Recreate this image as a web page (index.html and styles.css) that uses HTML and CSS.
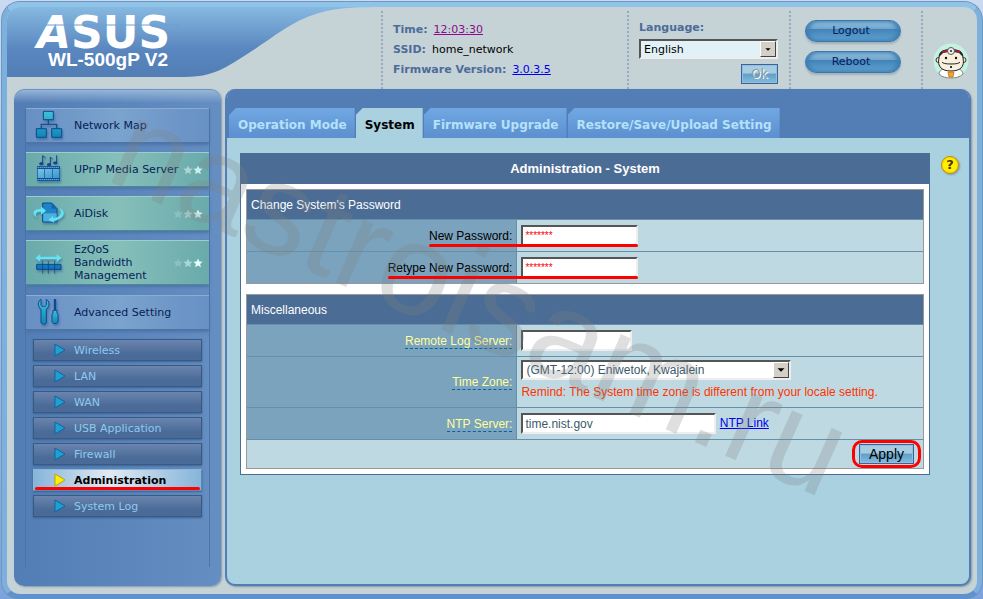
FILE: index.html
```html
<!DOCTYPE html>
<html lang="en">
<head>
    <meta charset="UTF-8">
    <meta name="viewport" content="width=device-width, initial-scale=1.0">
    <title>ASUS Wireless Router WL-500gP V2 - System</title>
    <link rel="stylesheet" href="styles.css">
</head>
<body>
    <svg class="defs" width="0" height="0" aria-hidden="true">
        <defs>
            <linearGradient id="teal" x1="0" y1="0" x2="0" y2="1">
                <stop offset="0" stop-color="#3fc0d8"/>
                <stop offset="1" stop-color="#0f86b4"/>
            </linearGradient>
            <linearGradient id="film" x1="0" y1="0" x2="1" y2="1">
                <stop offset="0" stop-color="#7cc4e4"/>
                <stop offset="1" stop-color="#3796cc"/>
            </linearGradient>
            <symbol id="star" viewBox="0 0 10 10">
                <path d="M5 .5 6.3 3.6 9.6 3.8 7.1 6 7.9 9.3 5 7.5 2.1 9.3 2.9 6 .4 3.8 3.7 3.6z" fill="#e8ffff"/>
            </symbol>
        </defs>
    </svg>

    <div class="frame">
        <header class="header">
            <svg class="brand" viewBox="0 0 376 72" width="376" height="72" role="img" aria-label="ASUS WL-500gP V2">
                <defs>
                    <linearGradient id="swoosh" x1="0" y1="0" x2="0" y2="1">
                        <stop offset="0" stop-color="#86b9e1"/>
                        <stop offset=".6" stop-color="#5a87bf"/>
                        <stop offset="1" stop-color="#527db5"/>
                    </linearGradient>
                </defs>
                <path d="M0 0H376C330 0 318 3 298 11C276 20 250 43 219 60C203 69 190 70 170 70H0z" fill="url(#swoosh)"/>
                <text class="brand-name" x="30" y="41"><tspan class="brand-slant">A</tspan>SUS</text>
                <path d="M38 18H174" stroke="#6f9fd0" stroke-width="1"/>
                <text class="brand-model" x="41" y="59">WL-500gP V2</text>
            </svg>
            <dl class="info">
                <div><dt>Time:</dt><dd><a class="visited" href="#time">12:03:30</a></dd></div>
                <div><dt>SSID:</dt><dd>home_network</dd></div>
                <div><dt>Firmware Version:</dt><dd><a href="#firmware">3.0.3.5</a></dd></div>
            </dl>
            <form class="language">
                <label for="lang">Language:</label>
                <span class="select">
                    <select id="lang"><option>English</option></select>
                    <svg viewBox="0 0 16 16" width="16" height="16"><path d="M5 7h6L8 10z"/></svg>
                </span>
                <button type="button" class="button button-off">Ok</button>
            </form>
            <div class="actions">
                <button type="button" class="pill">Logout</button>
                <button type="button" class="pill">Reboot</button>
            </div>
            <div class="doctor">
                <svg viewBox="0 0 36 36" width="36" height="36">
                    <circle cx="18" cy="18" r="17.500" fill="#c3f3e0"/>
                    <path d="M6 31C6 28 9 26 13 25h10c4 1 7 3 7 6-3 3-7 4-12 4s-9-1-12-4z" fill="#fff" stroke="#555" stroke-width=".7"/>
                    <circle cx="5.500" cy="17" r="2.500" fill="#f6e9d2" stroke="#333"/>
                    <circle cx="30.500" cy="17" r="2.500" fill="#f6e9d2" stroke="#333"/>
                    <path d="M6 15C6 8 11 7 18 7s12 1 12 8c2 9-3 13-12 13S4 24 6 15z" fill="#f8f0dc" stroke="#222"/>
                    <path d="M6 14C6 8 11 6 18 6s12 2 12 8l-4-4q-8-2-16 0z" fill="#23222a"/>
                    <path d="M9 9q9-3 18 0" stroke="#a51c40" stroke-width="2" fill="none"/>
                    <circle cx="18" cy="8" r="3.500" fill="#eee" stroke="#555"/>
                    <circle cx="18" cy="8" r="1" fill="#222"/>
                    <circle cx="13" cy="15" r="1.200" fill="#111"/>
                    <circle cx="23" cy="15" r="1.200" fill="#111"/>
                    <path d="M9 19q1 2 9 2t9-2" stroke="#222" fill="none"/>
                    <path d="M17 24h2" stroke="#333" stroke-width="2"/>
                    <path d="M15 29h6l-1 5h-4z" fill="#f0a820" stroke="#c65f12" stroke-width=".7"/>
                </svg>
            </div>
        </header>

        <div class="columns">
            <nav class="sidebar">
                <div class="rail">
                    <a class="item" href="#map">
                        <svg class="icon" viewBox="0 0 96 96"><path d="M46 30V43M25 55V43H71V55" stroke="#16508f" stroke-width="4" fill="none"/><g fill="url(#teal)" stroke="#0b4a93" stroke-width="3"><path d="M31 4h30v25H31zM10 56h30v26H10zM56 56h30v26H56z"/></g></svg>
                        Network Map
                    </a>
                    <a class="item item-green" href="#upnp">
                        <svg class="icon" viewBox="0 0 96 96"><g fill="#14418d" stroke="#14418d"><path d="M29 28V5l9 7M52 31V9l7 7M71 26V4" fill="none" stroke-width="3"/><ellipse cx="25" cy="29" rx="6" ry="4"/><ellipse cx="48" cy="32" rx="6" ry="4"/><ellipse cx="67" cy="27" rx="6" ry="4"/></g><path d="M12 36h69v45H12z" fill="#0c4f96"/><path d="M14 45h20v27H14zM36 45h22v27H36zM60 45h19v27H60z" fill="url(#film)"/><path d="M14 40h66M14 77h66" stroke="#aee4f4" stroke-width="3" stroke-dasharray="3 3"/></svg>
                        UPnP Media Server
                        <svg class="stars" viewBox="0 0 30 10"><use href="#star" x="10" width="10" height="10" opacity=".5"/><use href="#star" x="20" width="10" height="10" opacity=".8"/></svg>
                    </a>
                    <a class="item item-green" href="#aidisk">
                        <svg class="icon" viewBox="0 0 96 96"><path d="M29 15h27l16 17v40H29z" fill="#1f83c4" stroke="#0b4a93" stroke-width="3"/><path d="M31 46h40v24H31z" fill="#4db1de"/><path d="M56 15v17h16z" fill="#0f63b5"/><path d="M14 60C-6 50-2 30 24 33V25l15 13-15 12v-9C8 40 4 50 14 60z" fill="#62e4f4"/><path d="M78 30c24 8 18 34-16 38l2 6-18-8 14-12 1 7c22-3 30-18 17-31z" fill="#62e4f4"/></svg>
                        AiDisk
                        <svg class="stars" viewBox="0 0 30 10"><use href="#star" width="10" height="10" opacity=".2"/><use href="#star" x="10" width="10" height="10" opacity=".5"/><use href="#star" x="20" width="10" height="10" opacity=".9"/></svg>
                    </a>
                    <a class="item item-green item-tall" href="#ezqos">
                        <svg class="icon" viewBox="0 0 96 96"><path d="M7 33l15-12v8h49v-8l15 12-15 12v-8H22v8z" fill="#62e4f4"/><path d="M11 52h73v15H11z" fill="#1178bd" stroke="#0b4a93" stroke-width="3"/><path d="M29 42v38M46 42v38M65 42v38" stroke="#123a63" stroke-width="2"/></svg>
                        <span class="item-text">EzQoS Bandwidth Management</span>
                        <svg class="stars" viewBox="0 0 30 10"><use href="#star" width="10" height="10" opacity=".2"/><use href="#star" x="10" width="10" height="10" opacity=".5"/><use href="#star" x="20" width="10" height="10"/></svg>
                    </a>
                    <a class="item" href="#advanced">
                        <svg class="icon" viewBox="0 0 96 96"><path d="M24 7c-9 5-10 17-5 24l5 7v38c0 7 16 7 16 0V38l5-7c5-7 4-19-5-24v16c0 7-16 7-16 0z" fill="url(#teal)" stroke="#0b4a93" stroke-width="3"/><path d="M66 6v34" stroke="#0b4a93" stroke-width="7"/><path d="M60 40h12v8l3 5v20c0 9-18 9-18 0V53l3-5z" fill="url(#teal)" stroke="#0b4a93" stroke-width="3"/></svg>
                        Advanced Setting
                    </a>
                    <ul class="submenu">
                        <li><a href="#wireless"><svg viewBox="0 0 12 14"><path d="M1 1v12l10-6z"/></svg>Wireless</a></li>
                        <li><a href="#lan"><svg viewBox="0 0 12 14"><path d="M1 1v12l10-6z"/></svg>LAN</a></li>
                        <li><a href="#wan"><svg viewBox="0 0 12 14"><path d="M1 1v12l10-6z"/></svg>WAN</a></li>
                        <li><a href="#usb"><svg viewBox="0 0 12 14"><path d="M1 1v12l10-6z"/></svg>USB Application</a></li>
                        <li><a href="#firewall"><svg viewBox="0 0 12 14"><path d="M1 1v12l10-6z"/></svg>Firewall</a></li>
                        <li><a class="current" href="#administration"><svg viewBox="0 0 12 14"><path d="M1 1v12l10-6z"/></svg>Administration</a></li>
                        <li><a href="#log"><svg viewBox="0 0 12 14"><path d="M1 1v12l10-6z"/></svg>System Log</a></li>
                    </ul>
                </div>
            </nav>

            <main class="main">
                <nav class="tabs">
                    <a href="#mode">Operation Mode</a>
                    <a class="active" href="#system">System</a>
                    <a href="#upgrade">Firmware Upgrade</a>
                    <a href="#setting">Restore/Save/Upload Setting</a>
                </nav>
                <div class="content">
                    <form class="panel">
                        <h1>Administration - System</h1>
                        <div class="panel-body">
                            <table class="settings">
                                <thead>
                                    <tr><th colspan="2">Change System's Password</th></tr>
                                </thead>
                                <tbody>
                                    <tr>
                                        <th><label class="marked" for="pw1">New Password:</label></th>
                                        <td><input class="secret" id="pw1" type="text" value="*******"></td>
                                    </tr>
                                    <tr>
                                        <th><label class="marked" for="pw2">Retype New Password:</label></th>
                                        <td><input class="secret" id="pw2" type="text" value="*******"></td>
                                    </tr>
                                </tbody>
                            </table>
                            <table class="settings">
                                <thead>
                                    <tr><th colspan="2">Miscellaneous</th></tr>
                                </thead>
                                <tbody>
                                    <tr>
                                        <th><label class="hint" for="log">Remote Log Server:</label></th>
                                        <td><input class="short" id="log" type="text"></td>
                                    </tr>
                                    <tr>
                                        <th><label class="hint" for="tz">Time Zone:</label></th>
                                        <td>
                                            <span class="select zone">
                                                <select id="tz"><option>(GMT-12:00) Eniwetok, Kwajalein</option></select>
                                                <svg viewBox="0 0 16 16" width="16" height="16"><path d="M4 6h8l-4 4z"/></svg>
                                            </span>
                                            <p class="remind">Remind: The System time zone is different from your locale setting.</p>
                                        </td>
                                    </tr>
                                    <tr>
                                        <th><label class="hint" for="ntp">NTP Server:</label></th>
                                        <td><input class="long" id="ntp" type="text" value="time.nist.gov"> <a href="#ntp-link">NTP Link</a></td>
                                    </tr>
                                </tbody>
                                <tfoot>
                                    <tr><td colspan="2"><span class="ring"><button type="button" class="button apply">Apply</button></span></td></tr>
                                </tfoot>
                            </table>
                        </div>
                    </form>
                    <button type="button" class="help" aria-label="Help">?</button>
                </div>
            </main>
        </div>
        <div class="watermark">nastroisam.ru</div>
    </div>
</body>
</html>
```

FILE: styles.css
```css
* {
    box-sizing: border-box;
}

body {
    display: flex;
    min-height: 100vh;
    margin: 0;
    padding: 2px 1px 0 2px;
    background: linear-gradient(#cbdaf0, #7ea2dc);
    font-family: "DejaVu Sans", Verdana, sans-serif;
    font-size: 11px;
}

button, input, select {
    font-family: inherit;
}

a {
    color: #0000ee;
}

.defs {
    position: absolute;
}

.frame {
    position: relative;
    flex: 1;
    display: flex;
    flex-direction: column;
    overflow: hidden;
    padding: 0 6px 8px 7px;
    border: 5px solid #7db4de;
    border-color: #8fc4e8 #7db0dc #5f92cc #7db0dc;
    border-radius: 18px;
    background-color: #c5d2d6;
    box-shadow: 0 0 0 1px #6c98c2;
}

/* Header */
.header {
    display: grid;
    grid-template-columns: 374px 1fr 162px 132px 56px;
    height: 82px;
    margin: 0 -6px 0 -7px;
}

.brand {
    overflow: visible;
}

.info, .language, .actions, .doctor {
    margin: 0;
    background: repeating-linear-gradient(#95a9c0 0 2px, transparent 2px 4px) 0 4px / 2px 100% no-repeat;
}

.brand-name {
    font-size: 44px;
    font-weight: bold;
    fill: #fff;
}

.brand-slant {
    font-style: italic;
}

.brand-model {
    font-family: "Liberation Sans", Arial, sans-serif;
    font-size: 19px;
    font-weight: bold;
    fill: #fff;
}

.info {
    padding: 13px 0 0 12px;
}

.info div {
    display: flex;
    gap: 6px;
    height: 20px;
    line-height: 20px;
}

.info dt, .language label {
    color: #4d6c99;
    font-weight: bold;
}

.info dd {
    margin: 0;
}

.info .visited {
    color: #8b0a8b;
}

.language {
    display: flex;
    flex-direction: column;
    align-items: flex-end;
    gap: 4px;
    padding: 14px 11px 0 12px;
}

.language label {
    align-self: flex-start;
    line-height: 14px;
}

.language .select {
    width: 100%;
    margin-bottom: 1px;
}

.language select {
    background-color: #e2f1f5;
}

.select {
    position: relative;
    display: block;
}

.select select {
    display: block;
    width: 100%;
    height: 20px;
    padding: 0 20px 0 3px;
    appearance: none;
    border: 2px solid;
    border-color: #555 #eee #eee #555;
    border-radius: 0;
    font-size: 11px;
}

.select svg {
    position: absolute;
    top: 2px;
    right: 2px;
    border: 1px solid;
    border-color: #fff #444 #444 #fff;
    background-color: #d4d0c8;
    pointer-events: none;
}

.button {
    height: 20px;
    border: 1px solid #3f6199;
    background: linear-gradient(#a6cce2 0 45%, #5f9fc8 50%, #86bcdc);
    box-shadow: inset 0 0 0 1px #8fc0df;
    line-height: 16px;
    cursor: pointer;
}

.button-off {
    width: 37px;
    padding: 0;
    color: #8d9aa6;
    font-size: 12px;
    text-shadow: 1px 1px 0 #fff;
}

.actions {
    display: flex;
    flex-direction: column;
    align-items: center;
    gap: 9px;
    padding: 13px 4px 0 0;
}

.pill {
    width: 96px;
    height: 22px;
    border: 1px solid #3a79ad;
    border-radius: 11px;
    padding: 0 4px 2px 0;
    background: linear-gradient(#9cc4df, #6ea6cf 38%, #4383b8 42%, #62a4d2);
    box-shadow: inset 3px 0 4px #3f7fb4, inset -3px 0 4px #3f7fb4, 0 2px 2px #a2b0b8;
    color: #03205c;
    font-size: 11px;
    cursor: pointer;
}

.doctor {
    padding: 36px 0 0 12px;
}

/* Columns */
.columns {
    flex: 1;
    display: flex;
    gap: 4px;
}

.sidebar {
    width: 207px;
    padding: 19px 11px 19px;
    border-radius: 10px;
    background: linear-gradient(#9bb8da, #5f8ac000 14px), linear-gradient(90deg, #527db5, #658fc2);
    box-shadow: 1px 1px 2px #8697a8, inset 0 1px 0 #6b94c0;
}

.rail {
    display: flex;
    flex-direction: column;
    gap: 9px;
    height: 100%;
    border: solid #4a74aa;
    border-width: 0 1px;
}

.item {
    position: relative;
    display: flex;
    align-items: center;
    gap: 9px;
    height: 35px;
    padding-left: 7px;
    border-top: 1px solid #88aed2;
    border-bottom: 1px solid #4e75a0;
    background: linear-gradient(90deg, #688fc3, #7aa3cd 50%, #6790c5);
    box-shadow: 0 2px 3px #4a74ab;
    color: #061f56;
    text-decoration: none;
    white-space: nowrap;
}

.item-green {
    border-top-color: #9ccfcb;
    border-bottom-color: #4d8b90;
    background: linear-gradient(90deg, #6aaaab, #86bfba 50%, #6aaaab);
}

.item-tall {
    height: 45px;
    margin-bottom: 1px;
}

.item-text {
    width: 90px;
    line-height: 13px;
    white-space: normal;
}

.icon {
    width: 32px;
    height: 32px;
    filter: drop-shadow(1px 2px 1px #2f5a8888);
}

.stars {
    position: absolute;
    right: 6px;
    width: 30px;
    height: 10px;
}

.submenu {
    display: flex;
    flex-direction: column;
    gap: 4px;
    margin: 0;
    padding: 0 7px;
    list-style: none;
}

.submenu a {
    position: relative;
    display: flex;
    align-items: center;
    gap: 8px;
    height: 22px;
    padding-left: 20px;
    border: 1px solid #395a84;
    background: linear-gradient(#6a85ae, #4a6a97 70%);
    box-shadow: 0 1px 2px #3d608e;
    color: #8ccaf0;
    text-decoration: none;
}

.submenu svg {
    width: 12px;
    height: 14px;
    fill: #1fa0d0;
    stroke: #0d65a0;
}

.submenu .current {
    border-color: #8fb6d6 #5d86b0 #5d86b0 #8fb6d6;
    background: linear-gradient(90deg, #86b5d9, #e2eaf4 45%, #86b5d9);
    color: #000;
    font-weight: bold;
}

.submenu .current svg {
    fill: #fff200;
    stroke: #c9a000;
}

.submenu .current::after {
    content: "";
    position: absolute;
    right: 1px;
    bottom: 0;
    left: 1px;
    height: 3px;
    border-radius: 2px;
    background-color: #f00;
}

/* Main area */
.main {
    flex: 1;
    overflow: hidden;
    border: 2px solid #527db5;
    border-top: 0;
    border-radius: 10px;
    background-color: #a9d1e0;
    box-shadow: 1px 1px 2px #8697a8;
}

.tabs {
    display: flex;
    gap: 1px;
    padding: 19px 2px 0;
    background-color: #527db5;
}

.tabs a {
    height: 30px;
    padding: 0 8px 0 9px;
    background: linear-gradient(#71a8e2, #5b8fd0);
    clip-path: polygon(7px 0, 100% 0, 100% 100%, 0 100%, 0 7px);
    color: #b5e1fa;
    font-size: 12px;
    font-weight: bold;
    line-height: 35px;
    text-decoration: none;
    white-space: nowrap;
}

.tabs .active {
    background: #a9d1e0;
    color: #000;
}

.content {
    display: flex;
    align-items: flex-start;
    gap: 11px;
    padding: 15px 10px 15px 13px;
}

.panel {
    flex: 1;
    border: 1px solid #4b6c94;
    background-color: #fff;
    font-family: "Liberation Sans", Arial, sans-serif;
    font-size: 12px;
}

.panel h1 {
    margin: 0;
    background-color: #4b6c94;
    color: #fff;
    font-size: 13px;
    line-height: 30px;
    text-align: center;
}

.panel-body {
    display: flex;
    flex-direction: column;
    gap: 10px;
    padding: 5px;
}

.settings {
    width: 100%;
    border: 1px solid #999;
    border-spacing: 0;
    background-color: #bfd9e2;
}

.settings th {
    height: 32px;
    width: 40%;
    padding: 0 4px;
    border-right: 1px solid #6490a8;
    background-color: #7ba3bd;
    font-weight: normal;
    text-align: right;
}

.settings thead th {
    height: 29px;
    border-right: 0;
    background-color: #4b6c94;
    color: #fff;
    text-align: left;
}

.settings td {
    padding: 3px 4px;
}

.settings tbody th, .settings tbody td {
    border-top: 1px solid #6490a8;
}

.settings tfoot td {
    height: 29px;
    padding: 0 2px;
    border-top: 1px solid #6490a8;
    text-align: right;
}

.settings input {
    height: 21px;
    padding: 0 2px;
    border: 2px solid;
    border-color: #555 #eee #eee #555;
    color: #3a5a6c;
    font-size: 12px;
    vertical-align: middle;
}

.settings .secret {
    width: 117px;
    color: #f00;
    font-size: 10px;
}

.settings .short {
    width: 111px;
}

.settings .long {
    width: 195px;
}

.settings .zone {
    width: 270px;
}

.zone select {
    color: #3a5a6c;
    background-color: #fff;
    font-size: 12px;
}

.hint {
    border-bottom: 1px dashed #006699;
    color: #ffff99;
}

.marked {
    position: relative;
}

.marked::after {
    content: "";
    position: absolute;
    right: -126px;
    bottom: -4px;
    left: 0;
    z-index: 1;
    height: 3px;
    border-radius: 2px;
    background-color: #f00;
}

.remind {
    margin: 5px 0 4px;
    color: #ff3300;
    line-height: 15px;
}

.ring {
    display: inline-block;
    margin: -2px 0;
    padding: 1px 4px;
    border: 3px solid #f00;
    border-radius: 10px;
}

.apply {
    display: block;
    width: 55px;
    padding: 0;
    font-size: 14px;
}

.help {
    width: 18px;
    height: 18px;
    margin-top: 3px;
    padding: 0;
    border: 1px solid #c98a00;
    border-radius: 50%;
    background: radial-gradient(#fff200 50%, #f0c000);
    box-shadow: 1px 1px 2px #7c98a4;
    color: #5a3000;
    font-size: 13px;
    font-weight: bold;
    line-height: 14px;
    cursor: pointer;
}

.watermark {
    position: absolute;
    top: 60px;
    left: 88px;
    color: #80808040;
    font-family: "Liberation Sans", Arial, sans-serif;
    font-size: 130px;
    line-height: 130px;
    white-space: nowrap;
    pointer-events: none;
    transform: rotate(24deg);
    transform-origin: 0 100%;
}
```
